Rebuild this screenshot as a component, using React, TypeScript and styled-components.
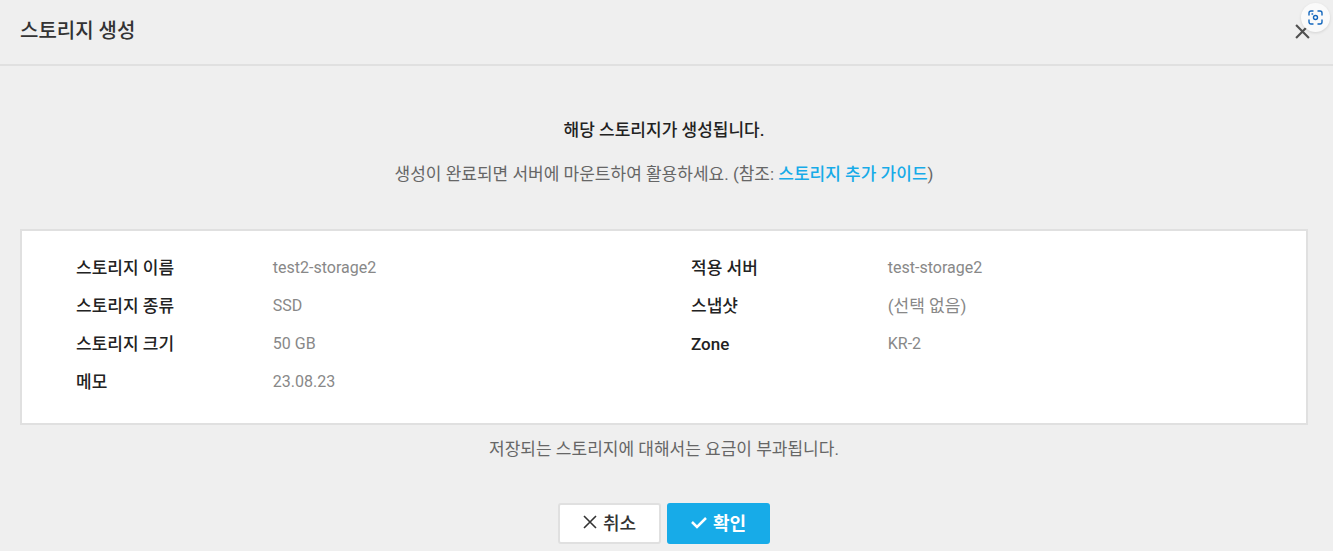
import React from "react";
import styled, { createGlobalStyle } from "styled-components";

const GlobalStyle = createGlobalStyle`
  * { box-sizing: border-box; }
  body {
    margin: 0;
    background: #efefef;
    color: #666;
    font-family: Roboto, "Noto Sans CJK KR", sans-serif;
    font-size: 17px;
  }
`;

const Dialog = styled.main`
  position: relative;
`;

const Header = styled.header`
  display: flex;
  align-items: center;
  justify-content: space-between;
  height: 66px;
  padding: 0 23px 2px 20px;
  border-bottom: 2px solid #e0e0e0;
`;

const Title = styled.h1`
  margin: 0;
  font-size: 20px;
  line-height: 28px;
  font-weight: 500;
  color: #333;
`;

const CloseButton = styled.button`
  display: flex;
  padding: 0;
  border: 0;
  background: none;
  color: #505050;
  cursor: pointer;
`;

const CaptureButton = styled.button`
  position: absolute;
  top: 3px;
  right: 3px;
  display: grid;
  place-items: center;
  width: 29px;
  height: 29px;
  padding: 0;
  border: 0;
  border-radius: 50%;
  background: #fafafa;
  box-shadow: 0 1px 3px rgba(0, 0, 0, 0.12);
  color: #1266bd;
  cursor: pointer;
`;

const Body = styled.section`
  display: flex;
  flex-direction: column;
  align-items: center;
  padding: 48px 25px 8px 20px;
  text-align: center;
`;

const Lead = styled.h2`
  margin: 0 0 12px;
  font-size: 17px;
  line-height: 32px;
  font-weight: 500;
  color: #222;
`;

const Note = styled.p`
  margin: 0;
  line-height: 32px;
`;

const GuideLink = styled.a`
  color: #17abe8;
  font-weight: 500;
  text-decoration: none;
`;

const Card = styled.div`
  display: grid;
  grid-template-columns: 1fr 1fr;
  align-items: start;
  width: 100%;
  margin: 39px 0 8px;
  padding: 18px 0 22px 54px;
  border: 2px solid #e0e0e0;
  background: #fff;
  text-align: left;
`;

const Details = styled.dl`
  display: grid;
  grid-template-columns: 32% 1fr;
  margin: 0;
  line-height: 38px;
`;

const Term = styled.dt`
  color: #222;
  font-weight: 500;
`;

const Value = styled.dd<{ $latin: boolean }>`
  margin: 0;
  color: #888;
  font-size: ${(p) => (p.$latin ? 16 : 17)}px;
`;

const Actions = styled.div`
  display: flex;
  gap: 6px;
  margin-top: 38px;
`;

const ActionButton = styled.button<{ $primary?: boolean }>`
  display: flex;
  align-items: center;
  justify-content: center;
  gap: 6px;
  width: 103px;
  height: 41px;
  padding: 0 0 3px;
  border: 2px solid ${(p) => (p.$primary ? "#17abe8" : "#e0e0e0")};
  border-radius: 3px;
  background: ${(p) => (p.$primary ? "#17abe8" : "#fff")};
  color: ${(p) => (p.$primary ? "#fff" : "#333")};
  font-family: inherit;
  font-size: 18px;
  font-weight: ${(p) => (p.$primary ? 700 : 500)};
  cursor: pointer;
`;

const Cross = ({ size, weight }: { size: number; weight: number }) => (
  <svg width={size} height={size} viewBox="0 0 14 14" fill="none" stroke="currentColor" strokeWidth={weight} aria-hidden="true">
    <path d="M1 1l12 12M13 1L1 13" />
  </svg>
);

const Check = () => (
  <svg width="16" height="14" viewBox="0 0 16 14" fill="none" stroke="currentColor" strokeWidth="2.5" aria-hidden="true">
    <path d="M1 7l5 5L15 3" />
  </svg>
);

const CaptureIcon = () => (
  <svg width="15" height="15" viewBox="0 0 15 15" fill="none" stroke="currentColor" strokeWidth="1.4" strokeLinecap="round" aria-hidden="true">
    <path d="M1 5V3a2 2 0 0 1 2-2h2M10 1h2a2 2 0 0 1 2 2v2M14 10v2a2 2 0 0 1-2 2h-2M5 14H3a2 2 0 0 1-2-2v-2" />
    <circle cx="7.5" cy="7.5" r="2" />
    <path d="M4 4h.6" />
  </svg>
);

type Pair = [string, string];

const storage: Pair[] = [
  ["스토리지 이름", "test2-storage2"],
  ["스토리지 종류", "SSD"],
  ["스토리지 크기", "50 GB"],
  ["메모", "23.08.23"],
];

const server: Pair[] = [
  ["적용 서버", "test-storage2"],
  ["스냅샷", "(선택 없음)"],
  ["Zone", "KR-2"],
];

const isLatin = (text: string) => /^[\x20-\x7e]+$/.test(text);

const DetailList = ({ items }: { items: Pair[] }) => (
  <Details>
    {items.map(([term, value]) => (
      <React.Fragment key={term}>
        <Term>{term}</Term>
        <Value $latin={isLatin(value)}>{value}</Value>
      </React.Fragment>
    ))}
  </Details>
);

export default function App() {
  return (
    <Dialog lang="ko">
      <GlobalStyle />
      <Header>
        <Title>스토리지 생성</Title>
        <CloseButton type="button" aria-label="닫기">
          <Cross size={15} weight={2} />
        </CloseButton>
      </Header>
      <CaptureButton type="button" aria-label="화면 캡처">
        <CaptureIcon />
      </CaptureButton>
      <Body>
        <Lead>해당 스토리지가 생성됩니다.</Lead>
        <Note>
          생성이 완료되면 서버에 마운트하여 활용하세요. (참조: <GuideLink href="#guide">스토리지 추가 가이드</GuideLink>)
        </Note>
        <Card>
          <DetailList items={storage} />
          <DetailList items={server} />
        </Card>
        <Note>저장되는 스토리지에 대해서는 요금이 부과됩니다.</Note>
        <Actions>
          <ActionButton type="button">
            <Cross size={14} weight={1.6} />
            취소
          </ActionButton>
          <ActionButton type="button" $primary>
            <Check />
            확인
          </ActionButton>
        </Actions>
      </Body>
    </Dialog>
  );
}
